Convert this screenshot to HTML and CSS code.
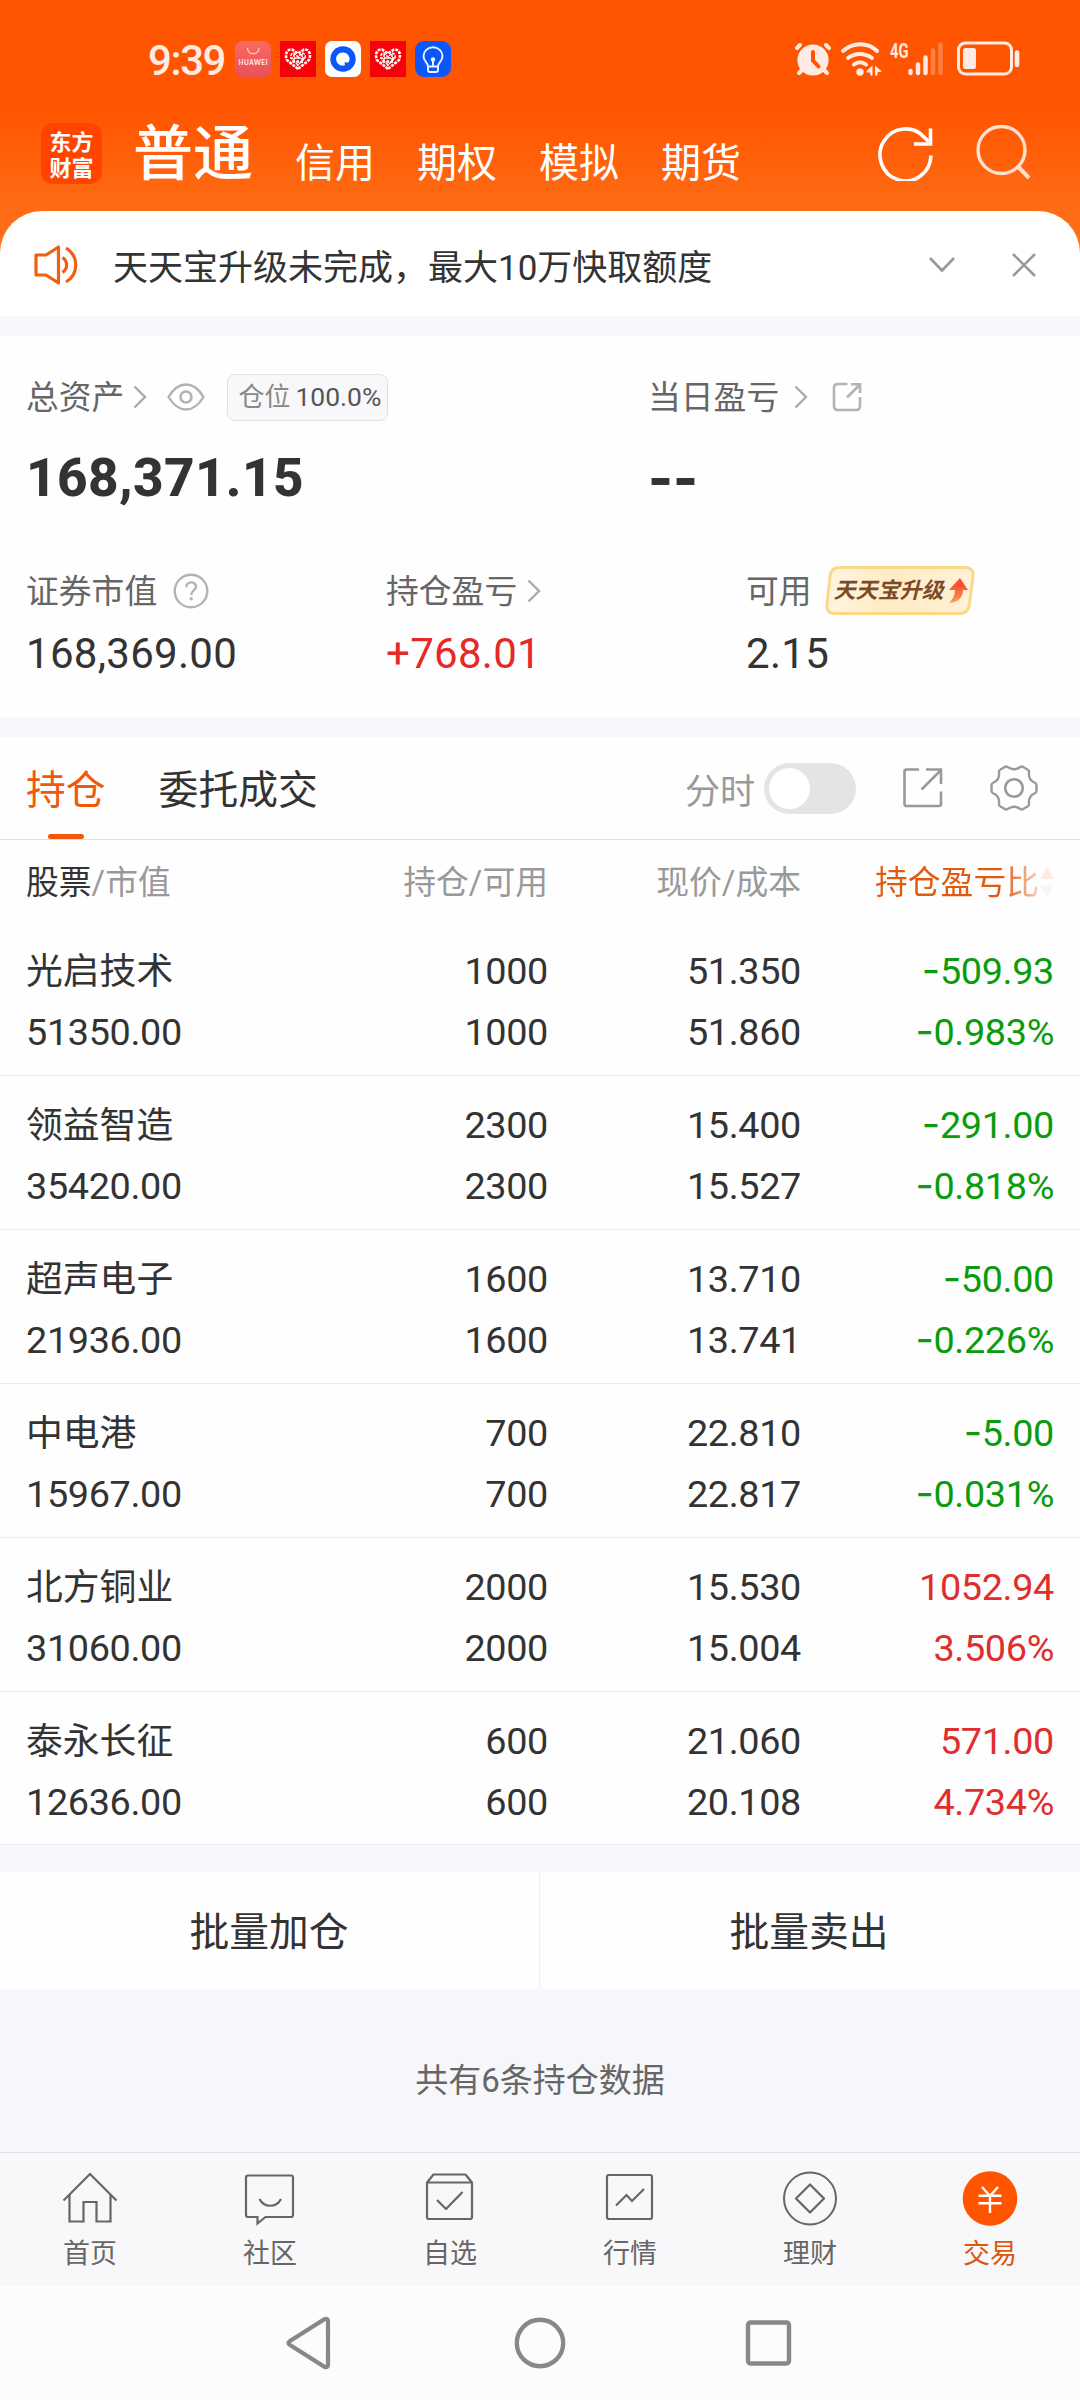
FILE: index.html
```html
<!DOCTYPE html>
<html lang="zh-CN">
<head>
<meta charset="utf-8">
<title>交易</title>
<link rel="stylesheet" href="styles.css">
</head>
<body>
<svg class="defs" width="0" height="0" aria-hidden="true">
  <symbol id="chevron" viewBox="0 0 14 24"><path d="M1.5 1.5 12 12 1.5 22.5" fill="none" stroke="#aaa" stroke-width="2.4"/></symbol>
  <symbol id="knot" viewBox="0 0 36 36">
    <rect width="36" height="36" fill="#f60009"/>
    <path d="M18 28 7 19C4.500 13 7 8 12 8.500l6 4 6-4c5-.5 7.500 4.500 5 10.500z" fill="none" stroke="#fff" stroke-width="2.600" stroke-dasharray="3 1"/>
    <path d="M18 24 11 17c-1-3 1-5 3-5l4 4 4-4c2 0 4 2 3 5zM14 13v9M22 13v9M18 15v10M10 17h16M12 20.500h12" fill="none" stroke="#fff" stroke-width="1.500" stroke-dasharray="3 1"/>
  </symbol>
</svg>

<header class="top">
  <div class="status">
    <span class="clock">9:39</span>
    <div class="notif">
      <svg width="36" height="36" viewBox="0 0 36 36"><defs><linearGradient id="hw" x2="0" y2="1"><stop stop-color="#fb6a62"/><stop offset="1" stop-color="#e8505b"/></linearGradient></defs><rect width="36" height="36" rx="8" fill="url(#hw)"/><path d="M12.500 7c0 7.500 11.500 7.500 11.500 0" fill="none" stroke="#ffc9b8" stroke-width="1.300"/><text x="18" y="23.500" text-anchor="middle" textLength="29" class="hw-text">HUAWEI</text></svg>
      <svg width="36" height="36"><use href="#knot"/></svg>
      <svg width="36" height="36" viewBox="0 0 36 36"><rect width="36" height="36" rx="7" fill="#fff"/><circle cx="18" cy="18" r="12.700" fill="#0b57fb"/><path d="M18 11.500a6.500 6.500 0 1 0 2 12.500l-.5-3 2.500.7a2.500 2.500 0 0 0 2.400-2.200A6.500 6.500 0 0 0 18 11.500z" fill="#fff"/></svg>
      <svg width="36" height="36"><use href="#knot"/></svg>
      <svg width="36" height="36" viewBox="0 0 36 36"><rect width="36" height="36" rx="9" fill="#0b57fb"/><g fill="none" stroke="#e8f6ff" stroke-width="1.900"><path d="M13 25.500c0-4-4.500-5-4.500-10.500a9.500 8.700 0 0 1 19 0c0 5.500-4.500 6.500-4.500 10.500zM13 25.500v3.500q0 2 2 2h6q2 0 2-2v-3.500M18 19v7"/></g><circle cx="18" cy="18.500" r="2.200" fill="#e8f6ff"/></svg>
    </div>
    <div class="signals">
      <svg width="38" height="36" viewBox="0 0 38 36"><g stroke="#ffebe3" stroke-width="4" stroke-linecap="round"><path d="m3 7 3-3M32 4l3 3M5 32l5-5M33 32l-5-5"/></g><circle cx="19" cy="19" r="15.600" fill="#ffebe3"/><path d="M19 11v8.500l5.500 6" fill="none" stroke="#ff5500" stroke-width="4" stroke-linecap="round"/></svg>
      <svg width="42" height="36" viewBox="0 0 42 36"><g fill="none" stroke="#ffebe3" stroke-width="4" stroke-linecap="round"><path d="M3 10C13 1 28 1 37 10M8 17c7-5.500 17-5.500 24 0M14 23.500c4-3 8-3 12 0"/></g><circle cx="20" cy="31" r="3.700" fill="#ffebe3"/><path d="m26.500 30 6-5.500v10h-2.300V31.500h-3.700zM35 24.500l7 6-4.500.8V34.500H35z" fill="#ffebe3"/></svg>
      <svg width="54" height="48" viewBox="0 -6 54 48"><text x="0" y="16.500" textLength="18.500" lengthAdjust="spacingAndGlyphs" class="net-text">4G</text><g stroke="#ffebe3" stroke-width="4.400" stroke-linecap="round"><path d="M20.500 30v2M28 23.500V32M35.500 16.500V32"/><path d="M43 9.500V32M50.500 3.500V32" opacity=".3"/></g></svg>
      <svg width="64" height="36" viewBox="0 0 64 36"><rect x="1.500" y="2" width="53" height="31" rx="7" fill="none" stroke="#ffebe3" stroke-width="3"/><rect x="6" y="7" width="13" height="21" rx="2.500" fill="#ffebe3"/><path d="M60 11.500v12.500" stroke="#ffebe3" stroke-width="4.600" stroke-linecap="round"/></svg>
    </div>
  </div>
  <div class="nav">
    <div class="logo">东方<br>财富</div>
    <nav class="markets"><a class="on">普通</a><a>信用</a><a>期权</a><a>模拟</a><a>期货</a></nav>
    <svg class="refresh" width="56" height="58" viewBox="0 0 56 58"><path d="M53 32.500A25.500 26 0 1 1 46.500 14.500L52 20M36 21h16.500V5.500" fill="none" stroke="#fff" stroke-width="3.600"/></svg>
    <svg class="search" width="56" height="58" viewBox="0 0 56 58"><ellipse cx="26.500" cy="27" rx="23.500" ry="23.500" fill="none" stroke="#ffe0d0" stroke-width="3.400"/><path d="m42.500 43 11.500 12" stroke="#ffe0d0" stroke-width="4"/></svg>
  </div>
</header>

<main>
  <section class="notice">
    <svg width="44" height="40" viewBox="0 0 44 40"><g fill="none" stroke="#f0600f" stroke-width="3.200" stroke-linejoin="round"><path d="M2 10h10L24.500 2v36L12 30H2zM28.500 12.500c5.500 4 5.500 11 0 15M32 3c13 8 13 26 0 34"/></g></svg>
    <p>天天宝升级未完成，最大10万快取额度</p>
    <svg width="28" height="18" viewBox="0 0 28 18"><path d="m2 2 12 12.500L26 2" fill="none" stroke="#999" stroke-width="2.600"/></svg>
    <svg class="close" width="26" height="26" viewBox="0 0 26 26"><path d="m2 2 22 22M24 2 2 24" stroke="#999" stroke-width="2.600"/></svg>
  </section>

  <section class="account">
    <div class="totals">
      <div>
        <div class="label"><span>总资产</span><svg class="c1" width="14" height="24"><use href="#chevron"/></svg>
          <svg class="eye" width="38" height="28" viewBox="0 0 38 28"><path d="M1.500 14Q9 1.500 19 1.500T36.500 14Q29 26.500 19 26.500T1.500 14z" fill="none" stroke="#b3b3b3" stroke-width="2.400"/><circle cx="19" cy="14" r="5.500" fill="none" stroke="#b3b3b3" stroke-width="2.600"/></svg>
          <span class="ratio">仓位 <b>100.0%</b></span></div>
        <div class="big">168,371.15</div>
      </div>
      <div>
        <div class="label"><span>当日盈亏</span><svg class="c2" width="14" height="24"><use href="#chevron"/></svg>
          <svg class="share" width="30" height="30" viewBox="0 0 30 30"><path d="M15.500 2H6Q2 2 2 6v18q0 4 4 4h18q4 0 4-4V15M15 15.500 27.500 3M19 2.200h9V11" fill="none" stroke="#b3b3b3" stroke-width="2.600"/></svg></div>
        <div class="big dash">--</div>
      </div>
    </div>
    <div class="parts">
      <div><div class="label"><span>证券市值</span><svg class="help" width="36" height="36" viewBox="0 0 36 36"><circle cx="18" cy="18" r="16.300" fill="none" stroke="#b3b3b3" stroke-width="2.400"/><path d="M13.300 14.300c0-6.500 9.700-6.300 9.700-.6 0 3.800-4.800 3.600-4.800 8.300" fill="none" stroke="#b3b3b3" stroke-width="2.400"/><circle cx="18.200" cy="25.700" r="1.700" fill="#b3b3b3"/></svg></div><div class="mid">168,369.00</div></div>
      <div><div class="label"><span>持仓盈亏</span><svg class="c3" width="14" height="24"><use href="#chevron"/></svg></div><div class="mid up">+768.01</div></div>
      <div><div class="label"><span>可用</span><span class="promo"><svg class="promo-bg" width="150" height="49" viewBox="0 0 150 49"><defs><linearGradient id="pg"><stop stop-color="#fff5df"/><stop offset=".45" stop-color="#ffebc4"/><stop offset="1" stop-color="#fff2d8"/></linearGradient></defs><path d="M14 1.500H140q9 0 8 9l-3.500 27q-1 10-10 10H10q-9 0-8-9L5 10.500q1-9 9-9z" fill="url(#pg)" stroke="#f9d888" stroke-width="2.800"/></svg><i>天天宝升级</i><svg class="rise" width="20" height="26" viewBox="0 0 20 26"><defs><linearGradient id="ag" x2="0" y2="1"><stop offset=".3" stop-color="#f7502f"/><stop offset="1" stop-color="#fba060"/></linearGradient></defs><path d="M12 0 20 12h-5C15 20 9 25 1 25q6-6 6-13H1z" fill="url(#ag)"/></svg></span></div><div class="mid">2.15</div></div>
    </div>
  </section>

  <section class="tabs">
    <a class="tab on">持仓</a><a class="tab">委托成交</a>
    <span class="mode">分时</span><span class="toggle"></span>
    <svg class="export" width="40" height="42" viewBox="0 0 40 42"><path d="M16 2.500H3.500q-2 0-2 2V37q0 2 2 2H36q2 0 2-2V24.500M18.500 22.500 37 4M23 2.500h15V17" fill="none" stroke="#999" stroke-width="2.600"/></svg>
    <svg class="gear" width="48" height="48" viewBox="0 0 48 48"><path d="M14.500 3.200q1.500-1.400 3.200-.2 6.300 4.500 12.600 0 1.700-1.200 3.200.2l4 2.300q1.900 1 1.500 2.800-.8 7.500 5.500 10.200 2 .8 2 2.500v6q0 1.700-2 2.500-6.300 2.700-5.500 10.200.4 1.800-1.500 2.800l-4 2.300q-1.500 1.400-3.200.2-6.300-4.500-12.600 0-1.700 1.200-3.200-.2l-4-2.300q-1.900-1-1.500-2.800.8-7.500-5.500-10.200-2-.8-2-2.500v-6q0-1.700 2-2.500 6.300-2.700 5.500-10.200-.4-1.800 1.500-2.800z" fill="none" stroke="#999" stroke-width="2.400" stroke-linejoin="round"/><circle cx="24" cy="24" r="8.800" fill="none" stroke="#999" stroke-width="2.600"/></svg>
  </section>

  <section class="holdings">
    <div class="row head"><span><b>股票</b>/市值</span><span>持仓/可用</span><span>现价/成本</span><span class="sort">持仓盈亏比<svg width="14" height="32" viewBox="0 0 14 32"><path d="m7 1 7 12H0z" fill="#fdece4"/><path d="m7 31 7-12H0z" fill="#f6f6f7"/></svg></span></div>
    <div class="row down"><span class="name">光启技术</span><span>1000</span><span>51.350</span><span><i>-</i>509.93</span><span>51350.00</span><span>1000</span><span>51.860</span><span><i>-</i>0.983%</span></div>
    <div class="row down"><span class="name">领益智造</span><span>2300</span><span>15.400</span><span><i>-</i>291.00</span><span>35420.00</span><span>2300</span><span>15.527</span><span><i>-</i>0.818%</span></div>
    <div class="row down"><span class="name">超声电子</span><span>1600</span><span>13.710</span><span><i>-</i>50.00</span><span>21936.00</span><span>1600</span><span>13.741</span><span><i>-</i>0.226%</span></div>
    <div class="row down"><span class="name">中电港</span><span>700</span><span>22.810</span><span><i>-</i>5.00</span><span>15967.00</span><span>700</span><span>22.817</span><span><i>-</i>0.031%</span></div>
    <div class="row rise-row"><span class="name">北方铜业</span><span>2000</span><span>15.530</span><span>1052.94</span><span>31060.00</span><span>2000</span><span>15.004</span><span>3.506%</span></div>
    <div class="row rise-row"><span class="name">泰永长征</span><span>600</span><span>21.060</span><span>571.00</span><span>12636.00</span><span>600</span><span>20.108</span><span>4.734%</span></div>
  </section>

  <section class="batch"><button>批量加仓</button><button>批量卖出</button></section>
  <p class="count">共有6条持仓数据</p>
</main>

<nav class="tabbar">
  <a><svg width="56" height="56" viewBox="0 0 56 56"><path d="M1.500 29.500 28 3l26.500 26.500M7.500 24v26.500h14V31h13v19.500h14V24" fill="none" stroke="#666" stroke-width="2.200"/></svg>首页</a>
  <a><svg width="56" height="56" viewBox="0 0 56 56"><path d="M6 4.500h43q2 0 2 2V44q0 2-2 2H23.500l-8 6.500V46H6q-2 0-2-2V6.500q0-2 2-2zM17.500 28c4.500 9 17 9 21.500 0" fill="none" stroke="#666" stroke-width="2.200"/></svg>社区</a>
  <a><svg width="56" height="56" viewBox="0 0 56 56"><path d="M5 11.500h45V46q0 2-2 2H7q-2 0-2-2zM5 11.500l6.500-8h32l6.500 8M15 29l9 9 16.500-17" fill="none" stroke="#666" stroke-width="2.200" stroke-linejoin="round"/></svg>自选</a>
  <a><svg width="56" height="56" viewBox="0 0 56 56"><path d="M7 4h41q2 0 2 2v40q0 2-2 2H7q-2 0-2-2V6q0-2 2-2zM14 34.500 24.500 24l5.500 6 12-12" fill="none" stroke="#666" stroke-width="2.200"/></svg>行情</a>
  <a><svg width="56" height="56" viewBox="0 0 56 56"><circle cx="28" cy="27.500" r="26" fill="none" stroke="#666" stroke-width="2"/><path d="m28 13.500 14 14-14 14-14-14z" fill="none" stroke="#666" stroke-width="2.200" stroke-linejoin="round"/></svg>理财</a>
  <a class="on"><svg width="56" height="56" viewBox="0 0 56 56"><circle cx="28" cy="27.500" r="27.300" fill="#ff5500"/><path d="m20 16 8 9 8-9M28 25v17M16.500 24.800h23M16.500 32.300h23" fill="none" stroke="#fff" stroke-width="2.400"/></svg>交易</a>
</nav>
<div class="system">
  <svg width="50" height="54" viewBox="0 0 50 54"><path d="M38.500 3.200q3.500-1.500 3.500 2v43.600q0 3.500-3.500 2L4 29q-3-2 0-4z" fill="none" stroke="#888" stroke-width="4.200"/></svg>
  <svg width="54" height="54" viewBox="0 0 54 54"><circle cx="27" cy="27" r="23.200" fill="none" stroke="#888" stroke-width="4.400"/></svg>
  <svg width="50" height="54" viewBox="0 0 50 54"><rect x="4" y="6.500" width="41" height="41" rx="2.500" fill="none" stroke="#888" stroke-width="4.400"/></svg>
</div>
</body>
</html>
```
FILE: styles.css
```css
* { box-sizing: border-box; margin: 0; padding: 0; }
body { width: 1080px; background: #f6f7fa; color: #333; font-family: Roboto, "Noto Sans CJK SC", sans-serif; }
svg { display: block; flex: none; }
.defs { position: absolute; }
span, a, i { white-space: nowrap; }

.top { height: 260px; margin-bottom: -49px; background: linear-gradient(#ff5500 42%, #ff6c16 81%, #ff6f1a); }
.status { display: flex; align-items: center; height: 118px; padding: 0 59px 0 148px; }
.clock { width: 87px; font-size: 42px; font-weight: 500; letter-spacing: -1.4px; color: #ffebe3; line-height: 60px; padding-top: 3px; }
.notif { display: flex; gap: 9px; }
.hw-text { font: 700 6.5px Lato, sans-serif; fill: #fff0ea; }
.signals { display: flex; align-items: center; margin-left: auto; gap: 8px; }
.signals svg:last-child { margin-left: 5px; }
.net-text { font: 700 20px Roboto, sans-serif; fill: #ffebe3; }
.nav { display: flex; align-items: flex-start; height: 74px; padding: 5px 49px 0 41px; }
.logo { width: 61px; height: 61px; padding-top: 4px; border-radius: 12px; background: #ff4400; color: #fff; font: 700 22px/26px "Noto Sans CJK SC", sans-serif; text-align: center; }
.markets { display: flex; flex: 1; margin-left: 31px; gap: 42px; color: #fff; font-size: 40px; line-height: 82px; }
.markets .on { font-size: 60px; font-weight: 500; line-height: 64px; }
.refresh { margin: 0 41px 0 0; }

main { position: relative; }
.notice { display: flex; align-items: center; height: 105px; padding: 0 43px 0 34px; background: #fff; border-radius: 42px 42px 0 0; }
.notice p { flex: 1; margin-left: 35px; padding-top: 10px; font-size: 35px; line-height: 60px; }
.notice svg { position: relative; top: 1px; }
.close { margin-left: 55px; }

.account { height: 381px; margin: 20px 0; padding: 31px 26px 0; background: #fefefe; }
.totals { display: grid; grid-template-columns: 622px 1fr; }
.label { display: flex; align-items: center; height: 60px; color: #666; font-size: 32.8px; line-height: 60px; }
.label > span:first-child { padding-top: 1px; }
.c1 { margin-left: 9px; }
.c2 { margin-left: 15px; }
.c3 { margin-left: 10px; }
.eye { margin-left: 20px; }
.share { margin-left: 24px; }
.help { margin-left: 16px; }
.ratio { display: flex; align-items: center; gap: 5px; width: 161px; height: 47px; margin-left: 22px; padding-left: 10px; border: 1px solid #e2e2e5; border-radius: 8px; background: #f8f8fa; color: #888; font-size: 26px; }
.ratio b { font-weight: 400; font-size: 26.500px; color: #555; }
.big { height: 60px; margin-top: 21px; font-size: 53px; font-weight: 800; line-height: 60px; letter-spacing: .4px; }
.dash { font-family: Inter, sans-serif; letter-spacing: 0; }
.parts { display: grid; grid-template-columns: 360px 360px 1fr; margin-top: 53px; }
.mid { height: 60px; margin-top: 3px; font-size: 42px; line-height: 60px; letter-spacing: .3px; }
.up { color: #e62829; }
.promo { position: relative; display: flex; align-items: center; width: 150px; height: 49px; margin: -1px 0 0 13px; padding-left: 9px; }
.promo-bg { position: absolute; inset: 0; }
.promo i { position: relative; font-size: 22px; font-weight: 700; color: #794b27; line-height: 44px; }
.rise { position: relative; margin-left: 4px; }

.tabs { display: flex; align-items: center; height: 103px; padding: 0 42px 0 26px; background: #fefefe; border-bottom: 1px solid #e0e0e2; font-size: 39.800px; }
.tab { position: relative; height: 102px; padding-top: 3px; line-height: 102px; margin-right: 53px; }
.tab.on { color: #f2580c; }
.tab.on::after { content: ""; position: absolute; left: 22px; bottom: 0; width: 36px; height: 5px; border-radius: 3px; background: #f2580c; }
.mode { margin-left: auto; font-size: 35px; color: #999; }
.toggle { width: 92px; height: 51px; margin-left: 9px; padding: 5px; border-radius: 26px; background: #e4e4e7; }
.toggle::before { content: ""; display: block; width: 41px; height: 41px; border-radius: 50%; background: #fff; }
.export { margin-left: 47px; }
.gear { margin-left: 47px; }

.row { display: grid; grid-template-columns: 300px 222px 253px 253px; height: 154px; padding: 19px 26px 0; background: #fefefe; border-bottom: 1px solid #ebebed; font-size: 37.800px; line-height: 61px; letter-spacing: -.35px; grid-auto-rows: 61px; }
.row span { text-align: right; }
.row span:nth-child(4n + 1) { text-align: left; }
.row .name { font-size: 36.800px; letter-spacing: 0; }
.row i { font: 400 40px Inter, sans-serif; line-height: 1; }
.down span:nth-child(4n) { color: #0a9c0e; }
.rise-row span:nth-child(4n) { color: #e02d2d; }
.row.head { height: 82px; padding-top: 13px; border: 0; font-size: 32.800px; letter-spacing: 0; color: #999; }
.head b { font-weight: 400; color: #333; }
.row.head .sort { display: flex; align-items: center; justify-content: flex-end; gap: 1px; background: linear-gradient(90deg, #e05a10 79%, #fdeee6 98%); background-clip: text; -webkit-background-clip: text; color: transparent; }
.sort svg { position: relative; top: -2px; }
.row:last-child { height: 153px; }

.batch { display: grid; grid-template-columns: 1fr 1fr; height: 117px; margin-top: 27px; background: linear-gradient(#f0f0f2, #f0f0f2) 539px 0 / 1px 100% no-repeat #fefefe; }
.batch button { border: 0; background: none; padding: 5px 2px 0 0; color: #333; font: 400 39.800px/110px Roboto, "Noto Sans CJK SC", sans-serif; }
.count { height: 163px; padding-top: 62px; text-align: center; color: #666; font-size: 33px; line-height: 60px; }

.tabbar { display: grid; grid-template-columns: repeat(6, 1fr); height: 134px; border-top: 1px solid #e2e2e4; background: #f8f8fa; }
.tabbar a { display: flex; flex-direction: column; align-items: center; padding-top: 18px; color: #666; font-size: 27px; line-height: 54px; }
.tabbar .on { color: #dc560f; }
.system { display: flex; align-items: center; justify-content: space-between; height: 114px; padding: 0 286px; background: #fcfcfc; }
```
